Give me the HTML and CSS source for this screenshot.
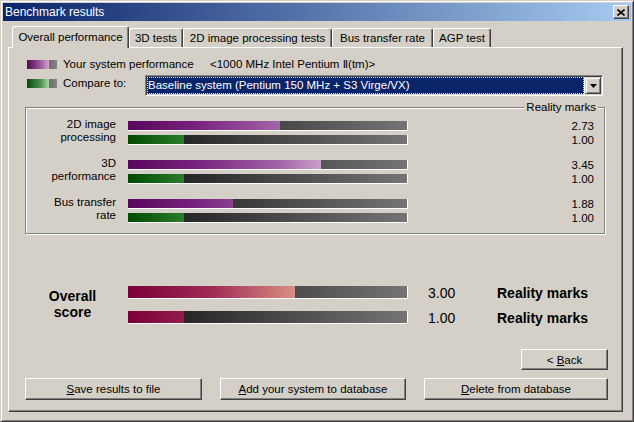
FILE: index.html
```html
<!DOCTYPE html>
<html>
<head>
<meta charset="utf-8">
<title>Benchmark results</title>
<link rel="stylesheet" href="styles.css">
</head>
<body>
<div class="window">
  <div class="titlebar">
    <span class="title">Benchmark results</span>
    <span class="close"><svg width="8" height="7" viewBox="0 0 8 7"><path d="M0.5 0.5 L7.5 6.5 M7.5 0.5 L0.5 6.5" stroke="#000" stroke-width="1.6" fill="none"/></svg></span>
  </div>
  <div class="tabs">
    <div class="tab active t1">Overall performance</div>
    <div class="tab t2">3D tests</div>
    <div class="tab t3">2D image processing tests</div>
    <div class="tab t4">Bus transfer rate</div>
    <div class="tab t5">AGP test</div>
  </div>
  <div class="panel">
    <div class="legend-row">
      <span class="swatch swatch-you"></span>
      <span class="legend-label">Your system performance</span>
      <span class="cpu">&lt;1000 MHz Intel Pentium <span class="roman">Ⅱ</span>(tm)&gt;</span>
    </div>
    <div class="legend-row compare">
      <span class="swatch swatch-base"></span>
      <span class="lbl-compare">Compare to:</span>
      <div class="combo">
        <div class="combo-value">Baseline system (Pentium 150 MHz + S3 Virge/VX)</div>
        <div class="combo-btn"><svg width="7" height="4" viewBox="0 0 7 4"><polygon points="0,0 7,0 3.5,4" fill="#000"/></svg></div>
      </div>
    </div>

    <div class="group">
      <div class="group-title">Reality marks</div>
      <div class="metric">
        <div class="metric-label">2D image<br>processing</div>
        <div class="bar"><div class="fill purple" style="width:54.6%"></div></div>
        <div class="num">2.73</div>
        <div class="bar"><div class="fill green" style="width:20%"></div></div>
        <div class="num">1.00</div>
      </div>
      <div class="metric">
        <div class="metric-label">3D<br>performance</div>
        <div class="bar"><div class="fill purple" style="width:69%"></div></div>
        <div class="num">3.45</div>
        <div class="bar"><div class="fill green" style="width:20%"></div></div>
        <div class="num">1.00</div>
      </div>
      <div class="metric">
        <div class="metric-label">Bus transfer<br>rate</div>
        <div class="bar"><div class="fill purple" style="width:37.6%"></div></div>
        <div class="num">1.88</div>
        <div class="bar"><div class="fill green" style="width:20%"></div></div>
        <div class="num">1.00</div>
      </div>
    </div>

    <div class="overall">
      <div class="overall-label">Overall<br>score</div>
      <div class="overall-rows">
        <div class="obar"><div class="ofill" style="width:60%"></div></div>
        <div class="oval">3.00</div>
        <div class="ounit">Reality marks</div>
        <div class="obar"><div class="ofill" style="width:20%"></div></div>
        <div class="oval">1.00</div>
        <div class="ounit">Reality marks</div>
      </div>
    </div>

    <div class="back-row">
      <button class="btn btn-back">&lt; <u>B</u>ack</button>
    </div>
    <div class="btn-row">
      <button class="btn btn-save"><u>S</u>ave results to file</button>
      <button class="btn btn-add"><u>A</u>dd your system to database</button>
      <button class="btn btn-del"><u>D</u>elete from database</button>
    </div>
  </div>
</div>
</body>
</html>
```

FILE: styles.css
```css
body {
  margin: 0;
  background: #d4d0c8;
  font-family: "Liberation Sans", "Noto Sans CJK JP", sans-serif;
  font-size: 11.5px;
  color: #000;
}

.window {
  width: 634px;
  height: 422px;
  box-sizing: border-box;
  border: 1px solid;
  border-color: #d4d0c8 #404040 #404040 #d4d0c8;
  box-shadow: inset 1px 1px #fff, inset -1px -1px #808080;
  padding: 2px;
  display: flex;
  flex-direction: column;
  overflow: hidden;
}

.titlebar {
  height: 18px;
  flex: none;
  background: linear-gradient(to right, #0a246a, #a6caf0);
  display: flex;
  align-items: center;
  justify-content: space-between;
  padding: 0 2px 0 2px;
  color: #fff;
  font-size: 12px;
}

.close {
  width: 16px;
  height: 14px;
  box-sizing: border-box;
  background: #d4d0c8;
  border: 1px solid;
  border-color: #fff #404040 #404040 #fff;
  box-shadow: inset -1px -1px #808080;
  display: flex;
  align-items: center;
  justify-content: center;
}

.tabs {
  display: flex;
  align-items: flex-end;
  height: 21px;
  flex: none;
  margin-top: 5px;
  padding-left: 9px;
  position: relative;
  z-index: 1;
}

.tab {
  box-sizing: border-box;
  height: 19px;
  border: 1px solid;
  border-bottom: none;
  border-color: #fff #404040 transparent #fff;
  box-shadow: inset -1px 0 #808080;
  border-radius: 3px 3px 0 0;
  background: #d4d0c8;
  text-align: center;
  line-height: 18px;
  white-space: nowrap;
  flex: none;
}

.tab.active {
  height: 22px;
  margin-bottom: -1px;
  line-height: 20px;
}

.t1 { width: 117px; }
.t2 { width: 54px; }
.t3 { width: 149px; }
.t4 { width: 101px; }
.t5 { width: 58px; }

.panel {
  box-sizing: border-box;
  width: 615px;
  height: 365px;
  flex: none;
  margin-left: 5px;
  border: 1px solid;
  border-color: #fff #404040 #404040 #fff;
  box-shadow: inset -1px -1px #808080;
  padding: 8px 14px 11px 16px;
  display: flex;
  flex-direction: column;
}

.legend-row {
  display: flex;
  align-items: center;
  height: 16px;
  padding-left: 2px;
  white-space: nowrap;
}

.legend-row.compare {
  height: 21px;
  margin-top: 3px;
  align-items: flex-start;
}

.swatch {
  width: 30px;
  height: 9px;
  flex: none;
  margin-right: 6px;
}

.compare .swatch { margin-top: 4px; }

.swatch-you {
  background: linear-gradient(to right, #560656, #9a5a9c 45%, #cfa6cf 73%, #6e6e6e 73%, #848484);
}

.swatch-base {
  background: linear-gradient(to right, #0a4a0a, #4c904c 45%, #a8d8a8 73%, #6e6e6e 73%, #848484);
}

.legend-label { width: 147px; flex: none; }

.roman { font-family: "DejaVu Sans", "Liberation Sans", sans-serif; font-size: 11px; }

.lbl-compare {
  width: 82px;
  flex: none;
  line-height: 17px;
}

.combo {
  width: 458px;
  height: 21px;
  flex: none;
  box-sizing: border-box;
  border: 1px solid;
  border-color: #808080 #fff #fff #808080;
  box-shadow: inset 1px 1px #404040, inset -1px -1px #d4d0c8;
  padding: 1px;
  background: #fff;
  display: flex;
}

.combo-value {
  flex: 1;
  margin-right: 1px;
  background: #0a246a;
  color: #fff;
  line-height: 17px;
  padding-left: 1px;
  outline: 1px dotted #e8e8a0;
  outline-offset: -1px;
  overflow: hidden;
}

.combo-btn {
  width: 16px;
  height: 17px;
  box-sizing: border-box;
  background: #d4d0c8;
  border: 1px solid;
  border-color: #d4d0c8 #404040 #404040 #d4d0c8;
  box-shadow: inset 1px 1px #fff, inset -1px -1px #808080;
  display: flex;
  align-items: center;
  justify-content: center;
}

.group {
  position: relative;
  margin-top: 11px;
  width: 580px;
  height: 127px;
  flex: none;
  box-sizing: border-box;
  border: 1px solid #808080;
  box-shadow: inset 1px 1px #fff, 1px 1px #fff;
  padding: 11px 10px 0 0;
}

.group-title {
  position: absolute;
  top: -7px;
  right: 6px;
  padding: 0 2px;
  background: #d4d0c8;
  line-height: 13px;
}

.metric {
  display: grid;
  grid-template-columns: 90px 280px 1fr;
  grid-template-rows: 14px 14px;
  column-gap: 12px;
}

.metric + .metric { margin-top: 11px; }

.metric-label {
  grid-row: 1 / span 2;
  text-align: right;
  line-height: 13px;
  margin-top: -1px;
}

.bar {
  height: 10px;
  margin-top: 2px;
  box-sizing: border-box;
  border-right: 1px solid #fff;
  border-bottom: 1px solid #fff;
  background: linear-gradient(to right, #121212, #3a3a3a 40%, #747474);
}

.num {
  text-align: right;
  line-height: 14px;
}

.fill {
  height: 100%;
  background-size: 279px 100%;
  background-repeat: no-repeat;
}

.fill.purple {
  background-image: linear-gradient(to right, #58065e, #78247e 25%, #a466a8 55%, #c8a0c8 69%, #e4cce4 100%);
}

.fill.green {
  background-image: linear-gradient(to right, #004a00, #2c7c2c 20%, #80c280 100%);
}

.overall {
  display: flex;
  align-items: center;
  height: 50px;
  margin-top: 46px;
  flex: none;
}

.overall-label {
  width: 95px;
  margin-right: 8px;
  text-align: center;
  font-weight: bold;
  font-size: 14px;
  line-height: 16px;
  margin-top: -2px;
}

.overall-rows {
  display: grid;
  grid-template-columns: 280px 49px auto;
  grid-auto-rows: 25px;
  column-gap: 20px;
  align-items: center;
}

.obar {
  height: 13px;
  box-sizing: border-box;
  border-right: 1px solid #fff;
  border-bottom: 1px solid #fff;
  background: linear-gradient(to right, #121212, #3a3a3a 40%, #747474);
}

.ofill {
  height: 100%;
  background-image: linear-gradient(to right, #7a0036, #a02a56 30%, #d89080 60%, #f0c4b0 100%);
  background-size: 279px 100%;
  background-repeat: no-repeat;
}

.oval { font-size: 14px; }

.ounit {
  font-size: 14px;
  font-weight: bold;
  white-space: nowrap;
}

.back-row {
  display: flex;
  justify-content: flex-end;
  margin-top: 19px;
  flex: none;
}

.btn-row {
  display: flex;
  justify-content: space-between;
  margin-top: 8px;
  flex: none;
}

.btn {
  box-sizing: border-box;
  height: 22px;
  padding: 0;
  background: #d4d0c8;
  border: 1px solid;
  border-color: #fff #404040 #404040 #fff;
  box-shadow: inset -1px -1px #808080;
  font-family: inherit;
  font-size: 11.5px;
  color: #000;
  white-space: nowrap;
}

.btn-back { width: 87px; height: 21px; }
.btn-save { width: 177px; }
.btn-add { width: 186px; }
.btn-del { width: 184px; }
```
